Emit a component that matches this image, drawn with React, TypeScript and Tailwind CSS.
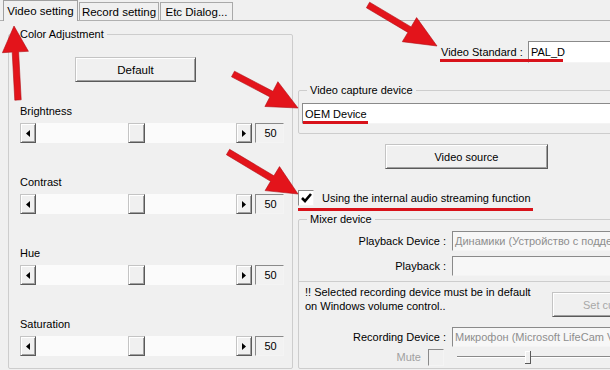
import React from "react";

function arrowPoints(x1: number, y1: number, x2: number, y2: number, sw = 3, hl = 28, hw = 12) {
  const dx = x2 - x1;
  const dy = y2 - y1;
  const L = Math.hypot(dx, dy);
  const ux = dx / L;
  const uy = dy / L;
  const px = -uy;
  const py = ux;
  const bx = x2 - ux * hl;
  const by = y2 - uy * hl;
  const pts = [
    [x1 + px * sw, y1 + py * sw],
    [bx + px * sw, by + py * sw],
    [bx + px * hw, by + py * hw],
    [x2, y2],
    [bx - px * hw, by - py * hw],
    [bx - px * sw, by - py * sw],
    [x1 - px * sw, y1 - py * sw],
  ];
  return pts.map((p) => `${p[0].toFixed(1)},${p[1].toFixed(1)}`).join(" ");
}

const raised =
  "border border-t-[#c4c4c4] border-l-[#c4c4c4] border-b-[#5a5a5a] border-r-[#5a5a5a] shadow-[inset_1px_1px_0_#ffffff,inset_-1px_-1px_0_#a0a0a0] bg-[#f0f0f0]";
const sunken =
  "border border-t-[#8a8a8a] border-l-[#8a8a8a] border-b-[#f4f4f4] border-r-[#f4f4f4]";

function ArrowBtn({ dir }: { dir: "left" | "right" }) {
  return (
    <div className={`flex h-[20px] w-[16px] items-center justify-center ${raised}`}>
      <svg width="4" height="7" viewBox="0 0 4 7">
        {dir === "left" ? <polygon points="4,0 4,7 0,3.5" fill="#000" /> : <polygon points="0,0 0,7 4,3.5" fill="#000" />}
      </svg>
    </div>
  );
}

function SliderRow({ label, first }: { label: string; first?: boolean }) {
  return (
    <div className={first ? "mt-[22px]" : "mt-[32px]"}>
      <div className="ml-[11px] h-[14px]">{label}</div>
      <div className="ml-[11px] mt-[5px] flex h-[20px]">
        <ArrowBtn dir="left" />
        <div className="flex w-[200px] bg-[#fbfbfb]">
          <div className="w-[92px]" />
          <div className={`h-[20px] w-[17px] ${raised}`} />
          <div className="flex-1" />
        </div>
        <ArrowBtn dir="right" />
        <div className={`ml-[3px] flex h-[20px] w-[29px] items-center justify-center bg-[#f2f2f2] pl-[2px] ${sunken}`}>50</div>
      </div>
    </div>
  );
}

export default function App() {
  return (
    <div className="relative h-[370px] w-[610px] overflow-hidden bg-[#f0f0f0] font-['Liberation_Sans',Arial,sans-serif] text-[11px] leading-[14px] text-black">
      {/* Tabs */}
      <div className="flex h-[21px] items-end border-b border-[#b0b0b0] pl-[3px]">
        <div className="relative z-10 -mb-px flex h-[21px] w-[75px] justify-center border border-b-0 border-[#a0a0a0] bg-[#f0f0f0] pt-[3px] text-[11.5px]">
          Video setting
        </div>
        <div className="ml-px flex h-[18px] w-[80px] justify-center border border-b-0 border-[#a9a9a9] bg-[#f0f0f0] pt-[2px] text-[11.5px]">
          Record setting
        </div>
        <div className="ml-px flex h-[18px] w-[73px] justify-center border border-b-0 border-[#a9a9a9] bg-[#f0f0f0] pt-[2px] text-[11.5px]">
          Etc Dialog...
        </div>
      </div>

      {/* Body */}
      <div className="flex">
        {/* Left group */}
        <fieldset className="ml-[8px] mt-[6px] h-[342px] w-[285px] shrink-0 rounded-[2px] border border-[#cdcdcd]">
          <legend className="ml-[8px] px-[3px] leading-[14px]">Color Adjustment</legend>
          <div className="flex flex-col">
            <div className={`ml-[66px] mt-[16px] flex h-[25px] w-[121px] items-center justify-center text-[11.5px] ${raised}`}>Default</div>
            <SliderRow label="Brightness" first />
            <SliderRow label="Contrast" />
            <SliderRow label="Hue" />
            <SliderRow label="Saturation" />
          </div>
        </fieldset>

        {/* Right column */}
        <div className="ml-[5px] w-[340px] shrink-0">
          <div className="mt-[20px] flex h-[22px] items-center">
            <div className="ml-[143px] w-[87px] shrink-0">Video Standard :</div>
            <div className={`flex h-[22px] flex-1 items-center bg-white pl-[2px] ${sunken}`}>PAL_D</div>
          </div>

          <fieldset className="mt-[20px] h-[51px] rounded-[2px] border border-[#cdcdcd]">
            <legend className="ml-[8px] px-[3px] leading-[14px]">Video capture device</legend>
            <div className={`ml-[3px] mt-[6px] flex h-[21px] items-center bg-white pl-[2px] ${sunken}`}>OEM Device</div>
          </fieldset>

          <div className={`ml-[87px] mt-[10px] flex h-[25px] w-[163px] items-center justify-center ${raised}`}>Video source</div>

          <div className="mt-[21px] flex h-[16px] items-center">
            <div className={`flex h-[16px] w-[16px] items-center justify-center bg-white ${sunken}`}>
              <svg width="11" height="10" viewBox="0 0 11 10">
                <path d="M1 5 L4 8 L10 1" fill="none" stroke="#000" strokeWidth="2.6" />
              </svg>
            </div>
            <div className="ml-[8px]">Using the internal audio streaming function</div>
          </div>

          <fieldset className="mt-[6px] h-[157px] rounded-[2px] border border-[#cdcdcd]">
            <legend className="ml-[8px] px-[3px] leading-[14px]">Mixer device</legend>
            <div className="mt-[5px] flex h-[20px] items-center">
              <div className="w-[147px] shrink-0 text-right">Playback Device :</div>
              <div className={`ml-[6px] flex h-[20px] flex-1 items-center overflow-hidden whitespace-nowrap bg-[#f7f7f7] pl-[2px] text-[#8e8e8e] ${sunken}`}>
                Динамики (Устройство с поддержкой)
              </div>
            </div>
            <div className="mt-[5px] flex h-[20px] items-center">
              <div className="w-[147px] shrink-0 text-right">Playback :</div>
              <div className={`ml-[6px] h-[20px] flex-1 bg-[#f7f7f7] ${sunken}`} />
            </div>
            <div className="mt-[5px] border-t border-[#cdcdcd]">
              <div className="flex w-[360px]">
                <div className="ml-[6px] mt-[3px] w-[247px] shrink-0 leading-[14px]">
                  !! Selected recording device must be in default
                  <br />
                  on Windows volume control..
                </div>
                <div className={`mt-[10px] flex h-[25px] w-[100px] shrink-0 items-center whitespace-nowrap text-[#a8a8a8] ${raised}`}>
                  <div className="w-[30px] shrink-0" />
                  <span>Set current</span>
                </div>
              </div>
              <div className="mt-[10px] flex h-[20px] items-center">
                <div className="w-[147px] shrink-0 text-right">Recording Device :</div>
                <div className={`ml-[6px] flex h-[20px] flex-1 items-center overflow-hidden whitespace-nowrap bg-[#f7f7f7] pl-[2px] text-[#8e8e8e] ${sunken}`}>
                  Микрофон (Microsoft LifeCam VX-1000)
                </div>
              </div>
              <div className="mt-px flex h-[18px] items-center">
                <div className="w-[122px] shrink-0 text-right text-[#a0a0a0]">Mute</div>
                <div className={`ml-[7px] h-[17px] w-[16px] shrink-0 bg-[#f0f0f0] ${sunken}`} />
                <div className="ml-[13px] flex flex-1 items-center">
                  <div className="h-[2px] w-[68px] border-t border-[#8a8a8a] border-b border-b-white" />
                  <div className="h-[13px] w-[6px] border-b border-r border-[#5a5a5a] bg-[#f0f0f0] shadow-[inset_1px_1px_0_#fff]" />
                  <div className="h-[2px] flex-1 border-t border-[#8a8a8a] border-b border-b-white" />
                </div>
              </div>
            </div>
          </fieldset>
        </div>
      </div>

      {/* Red annotations */}
      <svg className="pointer-events-none absolute inset-0" width="610" height="370" viewBox="0 0 610 370">
        <g fill="#e3141b" stroke="#b00c12" strokeWidth="0.6">
          <polygon points={arrowPoints(18, 100, 14, 26, 3.2, 26, 13)} />
          <polygon points={arrowPoints(368, 5, 437, 46, 3.2, 32, 14)} />
          <polygon points={arrowPoints(233, 74, 298, 108, 3.2, 30, 14)} />
          <polygon points={arrowPoints(228, 152, 298, 194, 3.2, 30, 14)} />
        </g>
        <g fill="#d8121a">
          <rect x="7" y="18" width="66" height="3" />
          <rect x="440" y="59" width="123" height="3" />
          <rect x="303" y="121" width="65" height="3" />
          <rect x="298" y="208" width="235" height="3" />
        </g>
      </svg>
    </div>
  );
}
